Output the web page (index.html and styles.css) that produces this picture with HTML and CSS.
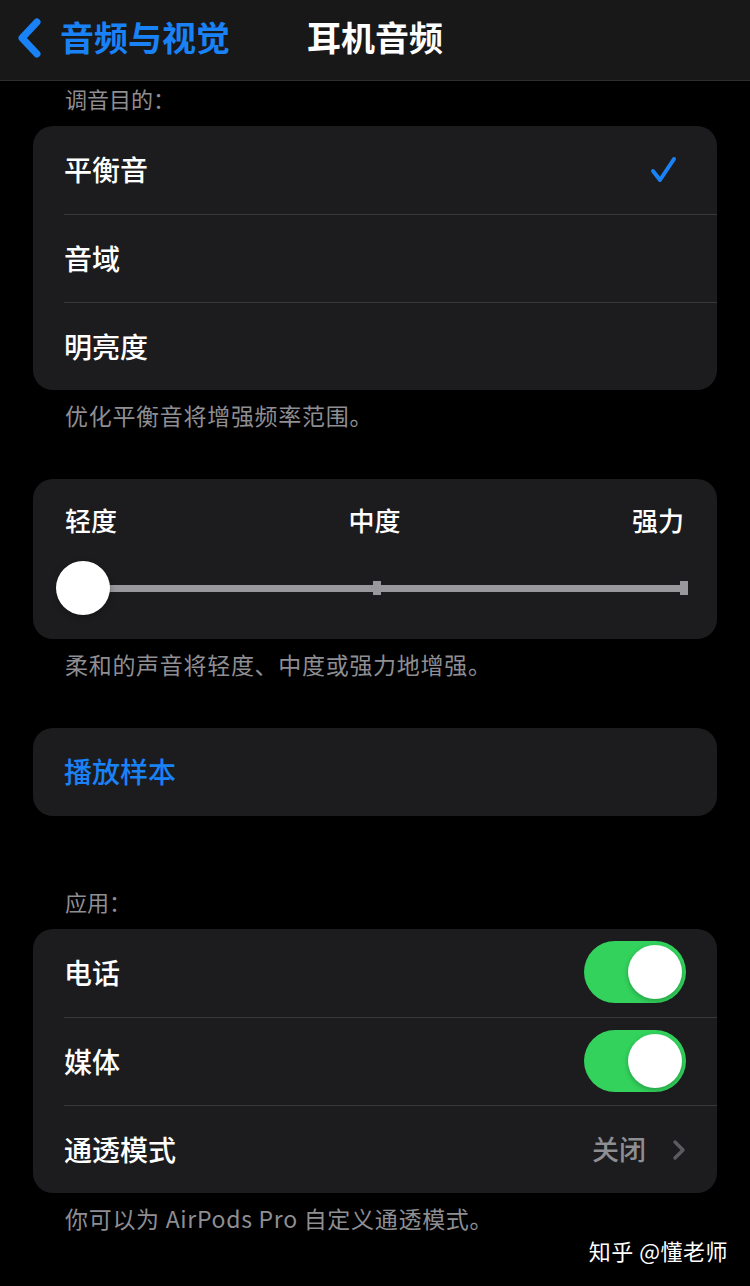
FILE: index.html
```html
<!DOCTYPE html>
<html lang="zh-CN">
<head>
<meta charset="utf-8">
<title>耳机音频</title>
<link rel="stylesheet" href="styles.css">
</head>
<body>
<div class="page">
  <header class="navbar">
    <div class="back">
      <svg class="back-icon" width="26" height="40" viewBox="0 0 26 40"><path d="M21 4 L6 20 L21 36" fill="none" stroke="#1a82f7" stroke-width="7" stroke-linecap="round" stroke-linejoin="round"/></svg>
      <span class="back-text">音频与视觉</span>
    </div>
    <div class="nav-title">耳机音频</div>
  </header>

  <div class="section-label">调音目的：</div>
  <div class="card">
    <div class="row"><span class="row-text">平衡音</span>
      <svg class="check" width="28" height="28" viewBox="0 0 28 28"><path d="M4 15 L11 24 L25 3" fill="none" stroke="#1a82f7" stroke-width="4" stroke-linecap="round" stroke-linejoin="round"/></svg>
    </div>
    <div class="row"><span class="row-text">音域</span></div>
    <div class="row"><span class="row-text">明亮度</span></div>
  </div>
  <div class="footnote">优化平衡音将增强频率范围。</div>

  <div class="card slider-card">
    <div class="slider-labels">
      <span>轻度</span><span>中度</span><span>强力</span>
    </div>
    <div class="slider">
      <div class="track">
        <span class="tick tick-start"></span>
        <span class="tick"></span>
        <span class="tick"></span>
      </div>
      <span class="thumb"></span>
    </div>
  </div>
  <div class="footnote">柔和的声音将轻度、中度或强力地增强。</div>

  <div class="card">
    <div class="row"><span class="row-text link">播放样本</span></div>
  </div>

  <div class="section-label spaced">应用：</div>
  <div class="card">
    <div class="row"><span class="row-text">电话</span><span class="toggle"><span class="knob"></span></span></div>
    <div class="row"><span class="row-text">媒体</span><span class="toggle"><span class="knob"></span></span></div>
    <div class="row"><span class="row-text">通透模式</span>
      <span class="detail">关闭
        <svg class="chevron" width="14" height="22" viewBox="0 0 14 22"><path d="M3 3 L11 11 L3 19" fill="none" stroke="#5b5b60" stroke-width="3.5" stroke-linecap="round" stroke-linejoin="round"/></svg>
      </span>
    </div>
  </div>
  <div class="footnote">你可以为 AirPods Pro 自定义通透模式。</div>

  <div class="watermark">知乎 @懂老师</div>
</div>
</body>
</html>
```

FILE: styles.css
```css
* { box-sizing: border-box; }
html, body {
  margin: 0;
  padding: 0;
  background: #000;
}
body {
  font-family: "Noto Sans CJK SC", "Noto Sans", sans-serif;
  color: #fff;
}
.page {
  position: relative;
  width: 750px;
  height: 1286px;
  overflow: hidden;
  background: #000;
}
.navbar {
  height: 81px;
  background: #181818;
  border-bottom: 1px solid #2e2e30;
  display: flex;
  align-items: center;
  padding-left: 16px;
  padding-bottom: 8px;
}
.back {
  display: flex;
  align-items: center;
  width: 291px;
}
.back-icon { margin-right: 18px; margin-top: 4px; }
.back-text {
  color: #1a82f7;
  font-size: 34px;
  font-weight: 700;
}
.nav-title {
  font-size: 34px;
  font-weight: 700;
}
.section-label {
  color: #8e8e93;
  font-size: 22px;
  line-height: 30px;
  padding: 2px 0 13px 65px;
}
.section-label.spaced { padding-top: 70px; }
.card {
  margin: 0 33px;
  background: #1c1c1e;
  border-radius: 20px;
  overflow: hidden;
}
.row {
  height: 88px;
  margin-left: 31px;
  padding-right: 31px;
  padding-bottom: 2px;
  display: flex;
  align-items: center;
  justify-content: space-between;
}
.row + .row { border-top: 1px solid #38383a; }
.row-text {
  font-size: 28px;
  font-weight: 500;
}
.row-text.link { color: #1a82f7; }
.check { margin-right: 9px; margin-top: 2px; }
.footnote {
  color: #8e8e93;
  font-size: 23px;
  line-height: 30px;
  padding: 10px 0 49px 65px;
  letter-spacing: 0.7px;
}
.slider-card {
  padding: 26px 33px 24px 32px;
}
.slider-labels {
  display: flex;
  justify-content: space-between;
  font-size: 26px;
  font-weight: 500;
  line-height: 30px;
}
.slider {
  position: relative;
  margin-top: 26px;
  height: 54px;
  display: flex;
  align-items: center;
}
.track {
  flex: 1;
  height: 7px;
  background: #98989d;
  display: flex;
  justify-content: space-between;
  align-items: center;
  margin-right: -4px;
}
.tick {
  width: 8px;
  height: 14px;
  background: #98989d;
}
.tick-start { visibility: hidden; }
.thumb {
  position: absolute;
  left: -9px;
  top: 0;
  width: 54px;
  height: 54px;
  border-radius: 50%;
  background: #fff;
  box-shadow: 0 2px 6px rgba(0,0,0,0.3);
}
.toggle {
  width: 102px;
  height: 62px;
  border-radius: 31px;
  background: #32d25c;
  display: flex;
  align-items: center;
  justify-content: flex-end;
  padding-right: 4px;
}
.knob {
  width: 54px;
  height: 54px;
  border-radius: 50%;
  background: #fff;
  box-shadow: 0 2px 5px rgba(0,0,0,0.25);
}
.detail {
  display: flex;
  align-items: center;
  gap: 26px;
  color: #8e8e93;
  font-size: 27px;
  font-weight: 500;
}
.chevron { margin-top: 2px; }
.watermark {
  position: absolute;
  right: 22px;
  bottom: 20px;
  font-size: 22px;
  color: #fff;
  letter-spacing: 0.5px;
}
```
